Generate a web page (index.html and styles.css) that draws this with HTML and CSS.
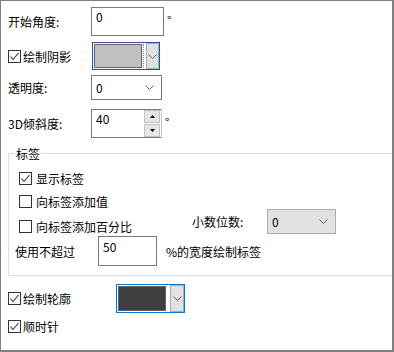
FILE: index.html
```html
<!DOCTYPE html>
<html>
<head>
<meta charset="utf-8">
<link rel="stylesheet" href="styles.css">
</head>
<body>
<div class="frame">
  <div class="row r1">
    <span class="lbl">开始角度:</span>
    <div class="textbox tb-angle"><span class="val">0</span></div>
    <span class="deg">°</span>
  </div>
  <div class="row r2">
    <label class="check chk-top w84"><span class="cb"><svg viewBox="0 0 11 11" width="11" height="11"><polyline points="1.5,5.5 4,8.5 9.5,2" class="tick"/></svg></span><span class="ctext">绘制阴影</span></label>
    <div class="colorcombo focused">
      <span class="swatch sw-light"></span>
      <span class="dotsep"></span>
      <span class="cbtn"><svg viewBox="0 0 9 5" width="9" height="5"><polyline points="0.5,0.5 4.5,4.5 8.5,0.5" class="chev"/></svg></span>
    </div>
  </div>
  <div class="row r3">
    <span class="lbl">透明度:</span>
    <div class="combo white w71"><span class="val">0</span><svg viewBox="0 0 9 5" width="9" height="5"><polyline points="0.5,0.5 4.5,4.5 8.5,0.5" class="chev"/></svg></div>
  </div>
  <div class="row r4">
    <span class="lbl">3D倾斜度:</span>
    <div class="spin">
      <span class="val">40</span>
      <div class="spinbtns">
        <span class="sbtn"><svg viewBox="0 0 5 3" width="5" height="3"><polygon points="2.5,0 5,3 0,3"/></svg></span>
        <span class="sbtn"><svg viewBox="0 0 5 3" width="5" height="3"><polygon points="0,0 5,0 2.5,3"/></svg></span>
      </div>
    </div>
    <span class="deg">°</span>
  </div>

  <div class="group">
    <span class="legend">标签</span>
    <div class="grow">
      <label class="check chk-in"><span class="cb"><svg viewBox="0 0 11 11" width="11" height="11"><polyline points="1.5,5.5 4,8.5 9.5,2" class="tick"/></svg></span><span class="ctext">显示标签</span></label>
    </div>
    <div class="grow g2">
      <label class="check chk-in"><span class="cb"></span><span class="ctext">向标签添加值</span></label>
    </div>
    <div class="grow g3">
      <label class="check chk-in w173"><span class="cb"></span><span class="ctext">向标签添加百分比</span></label>
      <span class="lbl-dec">小数位数:</span>
      <div class="combo gray w69"><span class="val">0</span><svg viewBox="0 0 9 5" width="9" height="5"><polyline points="0.5,0.5 4.5,4.5 8.5,0.5" class="chev"/></svg></div>
    </div>
    <div class="grow g4">
      <span class="lbl-max">使用不超过</span>
      <div class="textbox tb-pct"><span class="val">50</span></div>
      <span class="pct">%的宽度绘制标签</span>
    </div>
  </div>

  <div class="row r5">
    <label class="check chk-top w108"><span class="cb"><svg viewBox="0 0 11 11" width="11" height="11"><polyline points="1.5,5.5 4,8.5 9.5,2" class="tick"/></svg></span><span class="ctext">绘制轮廓</span></label>
    <div class="colorcombo outline">
      <span class="swatch sw-dark"></span>
      <span class="cbtn"><svg viewBox="0 0 9 5" width="9" height="5"><polyline points="0.5,0.5 4.5,4.5 8.5,0.5" class="chev"/></svg></span>
    </div>
  </div>
  <div class="row r6">
    <label class="check chk-top"><span class="cb"><svg viewBox="0 0 11 11" width="11" height="11"><polyline points="1.5,5.5 4,8.5 9.5,2" class="tick"/></svg></span><span class="ctext">顺时针</span></label>
  </div>
</div>
</body>
</html>
```

FILE: styles.css
```css
html, body {
  margin: 0;
  padding: 0;
  background: #fff;
}
body {
  font-family: "Noto Sans CJK SC", "Microsoft YaHei", sans-serif;
  font-size: 12px;
  color: #000;
}
.frame {
  width: 394px;
  height: 352px;
  box-sizing: border-box;
  border: 1px solid #808080;
  border-right-width: 2px;
  border-bottom-width: 2px;
  padding: 6px 0 0 7px;
  overflow: hidden;
  background: #fff;
}
.row {
  display: flex;
  align-items: center;
}
.r1 { height: 29px; }
.r2 { height: 28px; margin-top: 6px; }
.r3 { height: 25px; margin-top: 5px; }
.r4 { height: 29px; margin-top: 9px; }
.r5 { height: 29px; margin-top: 8px; }
.r6 { height: 13px; margin-top: 7px; }

.lbl {
  width: 83px;
  flex: none;
  line-height: 17px;
  white-space: nowrap;
}
.deg {
  margin-left: 3px;
  line-height: 17px;
  margin-top: -4px;
}
.val {
  line-height: 17px;
}

.textbox {
  box-sizing: border-box;
  border: 1px solid #7a7a7a;
  background: #fff;
  padding: 0 0 0 4px;
  align-self: stretch;
  display: flex;
  align-items: flex-start;
}
.tb-angle { width: 73px; }
.tb-pct { width: 59px; padding-left: 4px; padding-top: 1px; }

/* checkbox */
.check {
  display: flex;
  align-items: center;
  flex: none;
}
.cb {
  width: 13px;
  height: 13px;
  box-sizing: border-box;
  border: 1px solid #333;
  background: #fff;
  display: flex;
  align-items: center;
  justify-content: center;
  flex: none;
}
.cb svg { display: block; }
.tick {
  fill: none;
  stroke: #333;
  stroke-width: 1.1;
}
.ctext {
  line-height: 17px;
  white-space: nowrap;
}
.chk-top .ctext { margin-left: 2px; }
.chk-in .ctext { margin-left: 4px; }
.w84 { width: 84px; }
.w108 { width: 108px; }
.w173 { width: 173px; }

/* colour combo */
.colorcombo {
  display: flex;
  align-items: stretch;
  box-sizing: border-box;
  border: 1px solid #0078d7;
  padding: 1px 0 1px 1px;
  align-self: stretch;
}
.colorcombo.focused {
  width: 68px;
  outline: 1px dotted #7a1a8a;
  outline-offset: -1px;
}
.colorcombo.outline {
  width: 69px;
  padding-right: 1px;
}
.swatch {
  width: 48px;
  box-sizing: border-box;
  border: 1px solid #646464;
  flex: none;
}
.sw-light { background: #c0c0c0; }
.sw-dark { background: #404040; }
.dotsep {
  width: 0;
  border-left: 1px dotted #8a8a8a;
  margin-left: 1px;
}
.cbtn {
  width: 13px;
  box-sizing: border-box;
  border: 1px solid #adadad;
  background: #e1e1e1;
  margin: -1px 0 -1px 2px;
  display: flex;
  align-items: center;
  justify-content: center;
  flex: none;
}
.outline .cbtn {
  width: 14px;
  margin-left: 4px;
}
.chev {
  fill: none;
  stroke: #606060;
  stroke-width: 1;
}

/* dropdown combo */
.combo {
  box-sizing: border-box;
  height: 25px;
  display: flex;
  align-items: center;
  justify-content: space-between;
  padding: 0 7px 0 4px;
  flex: none;
}
.combo svg { display: block; }
.combo.white {
  border: 1px solid #7a7a7a;
  background: #fff;
}
.combo.gray {
  border: 1px solid #adadad;
  background: #e1e1e1;
}
.w71 { width: 71px; }
.w69 { width: 69px; }

/* spin box */
.spin {
  width: 71px;
  box-sizing: border-box;
  align-self: stretch;
  border: 1px solid #7a7a7a;
  border-right-color: #c8c8c8;
  display: flex;
  justify-content: space-between;
  align-items: flex-start;
  padding: 0 1px 0 4px;
  background: #fff;
}
.spinbtns {
  display: flex;
  flex-direction: column;
  gap: 1px;
  width: 16px;
  height: 100%;
}
.sbtn {
  flex: 1;
  box-sizing: border-box;
  border: 1px solid #c2c2c2;
  background: #e6e6e6;
  display: flex;
  align-items: center;
  justify-content: center;
}
.sbtn svg { display: block; fill: #000; }

/* group */
.group {
  position: relative;
  margin-top: 15px;
  margin-right: -30px;
  border: 1px solid #dcdcdc;
  padding: 18px 0 9px 10px;
}
.legend {
  position: absolute;
  left: 6px;
  top: -9px;
  padding: 0 1px;
  background: #fff;
  line-height: 17px;
}
.grow {
  display: flex;
  align-items: center;
  height: 13px;
}
.g2 { margin-top: 10px; }
.g3 {
  margin-top: 1px;
  height: 25px;
}
.g3 .check {
  align-self: flex-start;
  margin-top: 9px;
}
.lbl-dec {
  width: 75px;
  line-height: 17px;
  flex: none;
}
.g4 {
  margin-top: 2px;
  height: 30px;
  margin-left: -4px;
}
.lbl-max {
  width: 83px;
  line-height: 17px;
  flex: none;
}
.tb-pct { height: 30px; }
.pct {
  margin-left: 9px;
  line-height: 17px;
  white-space: nowrap;
}
```
